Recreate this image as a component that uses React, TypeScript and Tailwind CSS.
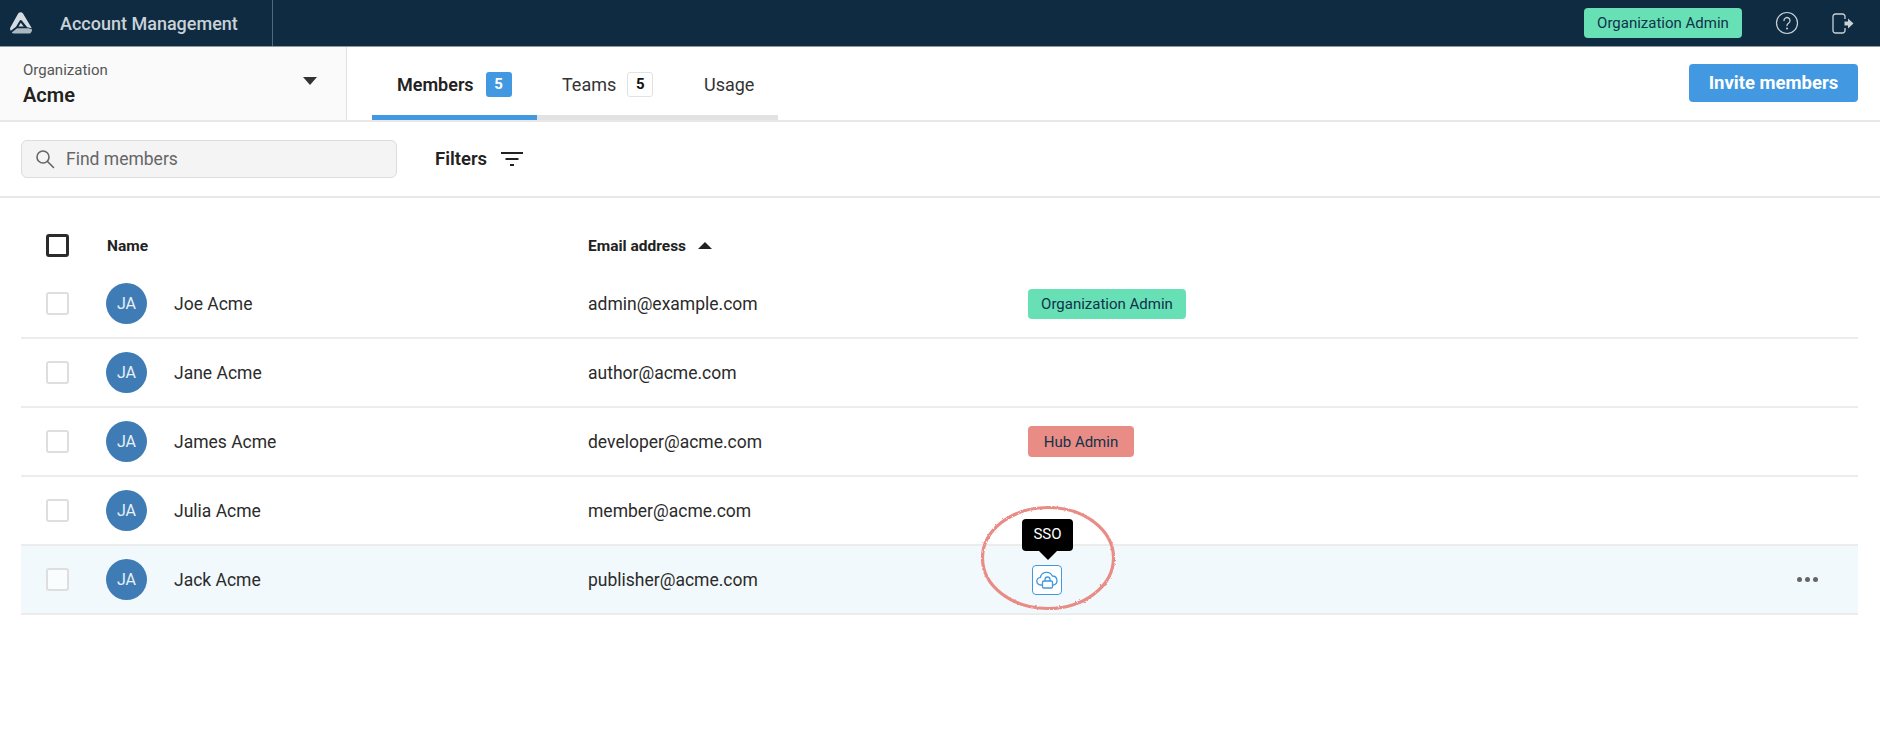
const font = "font-['Roboto',sans-serif]";

const members = [
  { name: "Joe Acme", email: "admin@example.com", role: "org" },
  { name: "Jane Acme", email: "author@acme.com", role: "" },
  { name: "James Acme", email: "developer@acme.com", role: "hub" },
  { name: "Julia Acme", email: "member@acme.com", role: "" },
  { name: "Jack Acme", email: "publisher@acme.com", role: "sso" },
];

const Logo = () => (
  <svg width="24" height="22" viewBox="0 0 24 22" className="ml-[9px]">
    <path d="M9.200 1.400C10.400 0 12.900 0 14 1.400L22.800 16.200 18.200 15.200 12.800 8.600C12.300 7.800 11.300 7.800 10.800 8.600L7 14.800 1.800 18.800C1 17.700 .9 16.400 1.500 15.300z" fill="#d5dde2" />
    <path d="M5 21.500c-1 0-1.800-.3-2.300-.9l5.400-4.300h11.400l3.400.9c.4 1.900-.9 4.300-3 4.300z" fill="#a9b8c1" />
    <path d="M9.500 14.500l2.300-3.700 2.900 3.700z" fill="#d5dde2" />
  </svg>
);

const CloudLock = () => (
  <svg width="23" height="18" viewBox="0 0 23 18" fill="none" stroke="#4299e1" strokeWidth="1.300" strokeLinecap="round" strokeLinejoin="round">
    <path d="M5.500 14H4.800a3.800 3.800 0 0 1-.4-7.600A6.300 6.300 0 0 1 16.300 5a4.600 4.600 0 0 1 1.400 9H17" />
    <rect x="6.500" y="10" width="10" height="7" rx="1.200" />
    <path d="M9 10V8.500a2.500 2.500 0 0 1 5 0V10" />
  </svg>
);

const Tab = ({ label, count, active }: { label: string; count: string; active?: boolean }) => (
  <div className={`flex items-center border-b-[5px] pl-[25px] pt-[6px] ${active ? "w-[165px] gap-[12px] border-[#4299e1]" : "w-[142px] gap-[11px] border-[#e2e2e2]"}`}>
    <span className={`text-[18px] ${active ? "font-semibold text-[#222]" : "text-[#333]"}`}>{label}</span>
    <span className={`flex h-[25px] w-[26px] items-center justify-center rounded-[3px] text-[15px] font-bold ${active ? "bg-[#4299e1] text-white" : "border border-[#e2e2e2] bg-white text-[#111]"}`}>
      {count}
    </span>
  </div>
);

const Row = ({ name, email, role }: { name: string; email: string; role: string }) => (
  <div className={`flex h-[69px] items-center border-b-2 border-[#ececec] ${role === "sso" ? "bg-[#f1f9fd]" : ""}`}>
    <div className="ml-[25px] h-[23px] w-[23px] rounded-[3px] border-2 border-[#dedede] bg-white/60" />
    <div className="ml-[37px] flex h-[41px] w-[41px] items-center justify-center rounded-full bg-[#3f7cb5] text-[16px] text-[#e8f0f7]">JA</div>
    <div className="ml-[27px] w-[414px] pt-[1px] text-[17.5px] text-[#2b2b2b]">{name}</div>
    <div className="w-[440px] pt-[1px] text-[17.5px] text-[#2b2b2b]">{email}</div>
    {role === "org" && (
      <div className="flex h-[30px] w-[158px] items-center justify-center rounded-[4px] bg-[#68e0b5] pt-[1px] text-[15px] text-[#10324a]">Organization Admin</div>
    )}
    {role === "hub" && (
      <div className="flex h-[31px] w-[106px] items-center justify-center rounded-[4px] bg-[#e98c85] pt-[1px] text-[15px] text-[#10324a]">Hub Admin</div>
    )}
    {role === "sso" && (
      <>
        <div className="relative ml-[4px] flex h-[30px] w-[30px] items-center justify-center rounded-[4px] border-[1.5px] border-[#4299e1] bg-white">
          <CloudLock />
          <div className="absolute bottom-[43px] left-[-11px] flex h-[32px] w-[51px] items-center justify-center rounded-[4px] bg-black text-[15px] text-white">
            SSO
            <span className="absolute top-full left-1/2 -ml-[9px] border-x-[9px] border-t-[9px] border-x-transparent border-t-black" />
          </div>
          {/* hand drawn circle from the annotation */}
          <svg width="146" height="116" viewBox="0 0 146 116" fill="none" className="absolute top-[-66px] left-[-58px]">
            <defs>
              <filter id="rough" x="-10%" y="-10%" width="120%" height="120%">
                <feTurbulence type="fractalNoise" baseFrequency="0.45" numOctaves="2" seed="4" />
                <feDisplacementMap in="SourceGraphic" scale="2.500" />
              </filter>
            </defs>
            <ellipse cx="73" cy="58" rx="65.500" ry="50.500" stroke="#e98c85" strokeWidth="3.200" filter="url(#rough)" />
          </svg>
        </div>
        <div className="ml-auto mr-[40px] flex gap-[3px]">
          <span className="h-[5px] w-[5px] rounded-full bg-[#666]" />
          <span className="h-[5px] w-[5px] rounded-full bg-[#666]" />
          <span className="h-[5px] w-[5px] rounded-full bg-[#666]" />
        </div>
      </>
    )}
  </div>
);

export default function App() {
  return (
    <div className={`${font} flex h-[740px] w-full flex-col bg-white`}>
      {/* Top bar */}
      <header className="flex h-[47px] items-center border-b border-[#8a99a5] bg-[#0f2b41]">
        <div className="flex h-full w-[273px] items-center border-r border-[#52687a]">
          <Logo />
          <span className="ml-[27px] text-[18px] font-medium text-[#c9d2d8]">Account Management</span>
        </div>
        <div className="ml-auto flex items-center">
          <div className="flex h-[30px] w-[158px] items-center justify-center rounded-[4px] bg-[#68e0b5] text-[15px] text-[#10324a]">Organization Admin</div>
          <svg width="24" height="24" viewBox="0 0 24 24" fill="none" className="ml-[33px]">
            <circle cx="12" cy="12" r="10.500" stroke="#c9d2d8" strokeWidth="1.200" />
            <path d="M9 9.500a3 3 0 1 1 4.700 2.500c-1 .7-1.700 1.200-1.700 2.500" stroke="#c9d2d8" strokeWidth="1.300" strokeLinecap="round" />
            <circle cx="12" cy="17.500" r="1" fill="#c9d2d8" />
          </svg>
          <svg width="22" height="21" viewBox="0 0 22 21" fill="none" className="ml-[33px] mr-[26px]">
            <path d="M13 6V3.500A2.500 2.500 0 0 0 10.500 1h-7A2.500 2.500 0 0 0 1 3.500v14A2.500 2.500 0 0 0 3.500 20h7a2.500 2.500 0 0 0 2.500-2.500V15" stroke="#c9d2d8" strokeWidth="1.300" />
            <path d="M12.500 8.500h3.500V5.500l5.500 5-5.500 5v-3h-3.500z" fill="#c9d2d8" />
          </svg>
        </div>
      </header>

      {/* Organization + tabs */}
      <div className="flex h-[75px] items-stretch border-b-2 border-[#e8e8e8]">
        <div className="flex w-[347px] items-center justify-between border-r border-[#e2e2e2] bg-[#fafafa] pl-[23px] pr-[29px]">
          <div className="pt-[2px]">
            <div className="text-[15px] leading-[20px] text-[#555]">Organization</div>
            <div className="text-[20px] leading-[30px] font-semibold text-[#222]">Acme</div>
          </div>
          <span className="mt-[-6px] border-x-[7px] border-t-[8px] border-x-transparent border-t-[#333]" />
        </div>
        <div className="ml-[25px] flex">
          <Tab label="Members" count="5" active />
          <Tab label="Teams" count="5" />
          <div className="flex w-[99px] items-center border-b-[5px] border-[#e2e2e2] pl-[25px] pt-[6px] text-[18px] text-[#333]">Usage</div>
        </div>
        <button className="ml-auto mr-[22px] mt-[17px] h-[38px] w-[169px] rounded-[4px] bg-[#4299e1] pt-[1px] text-[18.5px] font-bold text-white">Invite members</button>
      </div>

      {/* Search + filters */}
      <div className="flex h-[76px] items-center border-b-2 border-[#e8e8e8] pl-[21px]">
        <div className="flex h-[38px] w-[376px] items-center rounded-[6px] border border-[#dcdcdc] bg-[#f4f4f4] pl-[13px]">
          <svg width="20" height="20" viewBox="0 0 20 20" fill="none" stroke="#666" strokeWidth="1.600" strokeLinecap="round">
            <circle cx="8" cy="8" r="6" />
            <path d="M12.500 12.500L18.500 18.500" />
          </svg>
          <span className="ml-[11px] pt-[1px] text-[17.5px] text-[#666]">Find members</span>
        </div>
        <span className="ml-[38px] pt-[1px] text-[18.5px] font-semibold text-[#222]">Filters</span>
        <svg width="22" height="16" viewBox="0 0 22 16" fill="#222" className="ml-[14px]">
          <rect x="0" y="1" width="22" height="2" />
          <rect x="4.500" y="7" width="13" height="2" />
          <rect x="9" y="13" width="4" height="2" />
        </svg>
      </div>

      {/* Members table */}
      <div className="pl-[21px] pr-[22px]">
        <div className="flex h-[72px] items-center pt-[23px]">
          <div className="ml-[25px] h-[23px] w-[23px] rounded-[3px] border-[3px] border-[#2b2b2b]" />
          <div className="ml-[38px] w-[481px] pt-[2px] text-[15.5px] font-bold text-[#222]">Name</div>
          <div className="pt-[2px] text-[15.5px] font-bold text-[#222]">Email address</div>
          <span className="ml-[12px] border-x-[7px] border-b-[7px] border-x-transparent border-b-[#222]" />
        </div>
        {members.map((m) => (
          <Row key={m.email} {...m} />
        ))}
      </div>
    </div>
  );
}
